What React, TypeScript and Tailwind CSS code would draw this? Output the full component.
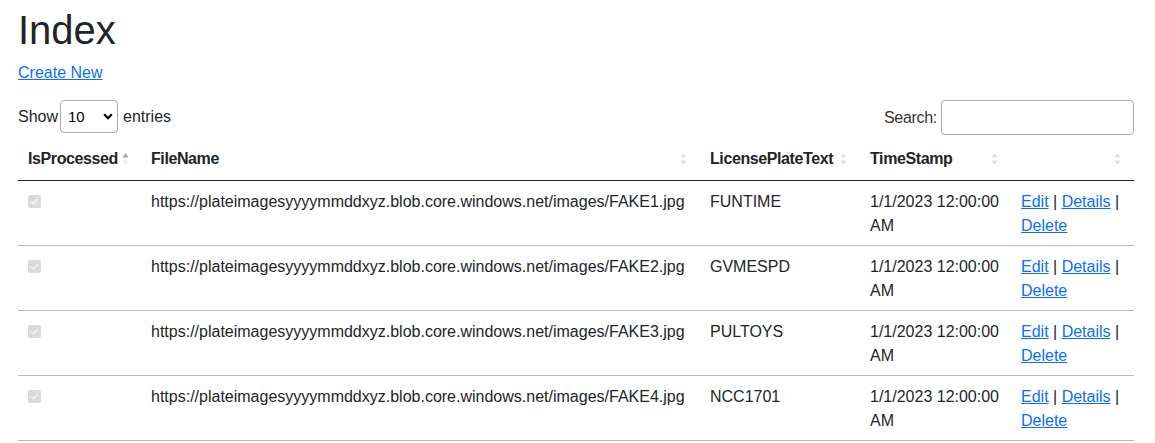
const rows = [
  { file: "FAKE1.jpg", plate: "FUNTIME" },
  { file: "FAKE2.jpg", plate: "GVMESPD" },
  { file: "FAKE3.jpg", plate: "PULTOYS" },
  { file: "FAKE4.jpg", plate: "NCC1701" },
];

function SortIcon({ active }: { active?: boolean }) {
  return (
    <svg width="7" height="14" viewBox="0 0 7 14" className="shrink-0">
      <path d="M3.5 1 L6.5 5.5 L0.5 5.5 Z" fill={active ? "#a3a3a3" : "#e2e2e2"} />
      <path d="M0.5 8.5 L6.5 8.5 L3.5 13 Z" fill={active ? "#ececec" : "#e2e2e2"} />
    </svg>
  );
}

function Th({ label, active }: { label: string; active?: boolean }) {
  return (
    <th className="pl-[10px] pr-[13px] pt-[8px] pb-[9px] text-left font-bold border-b border-[#212529]">
      <div className="flex items-center justify-between gap-1">
        <span className="tracking-[-0.4px]">{label}</span>
        <SortIcon active={active} />
      </div>
    </th>
  );
}

function Checked() {
  return (
    <div className="mt-[5px] w-[13px] h-[13px] rounded-[2px] bg-[#dadada] flex items-center justify-center">
      <svg width="11" height="11" viewBox="0 0 11 11">
        <path d="M2.2 5.6 L4.4 7.8 L8.8 3.2" stroke="#f4f4f4" strokeWidth="1.8" fill="none" />
      </svg>
    </div>
  );
}

export default function App() {
  return (
    <div className="pl-[18px] pr-[21px] font-['Liberation_Sans',Arial,sans-serif] text-[16px] leading-6 text-[#212529] bg-white">
      <h1 className="pt-[6px] mb-[7px] text-[40px] leading-[48px] font-medium">Index</h1>
      <p className="mb-[15px]">
        <a href="#" className="text-[#0d6efd] underline">Create New</a>
      </p>

      <div className="flex items-start justify-between h-[35px]">
        <div className="flex items-center h-[33px]">
          <span>Show</span>
          <div className="grid ml-[2px] mr-[5px]">
            <select
              defaultValue="10"
              className="col-start-1 row-start-1 appearance-none w-[58px] h-[33px] border border-[#aaaaaa] rounded-[4px] bg-white pl-[7px] text-[15px] text-black"
            >
              <option value="10">10</option>
              <option value="25">25</option>
              <option value="50">50</option>
              <option value="100">100</option>
            </select>
            <svg
              width="10"
              height="7"
              viewBox="0 0 10 7"
              className="col-start-1 row-start-1 self-center justify-self-end mr-[5px] pointer-events-none"
            >
              <path d="M1.2 1.3 L5 5.2 L8.8 1.3" stroke="#000" strokeWidth="2.2" fill="none" />
            </svg>
          </div>
          <span>entries</span>
        </div>
        <label className="flex items-center h-[35px]">
          <span className="mr-[4px] text-[#333] tracking-[-0.3px]">Search:</span>
          <input className="w-[193px] h-[35px] border border-[#aaaaaa] rounded-[4px] px-2 outline-none" />
        </label>
      </div>

      <table className="mt-[4px] w-full table-fixed border-collapse">
        <colgroup>
          <col className="w-[123px]" />
          <col className="w-[559px]" />
          <col className="w-[160px]" />
          <col className="w-[151px]" />
          <col className="w-[123px]" />
        </colgroup>
        <thead>
          <tr>
            <Th label="IsProcessed" active />
            <Th label="FileName" />
            <Th label="LicensePlateText" />
            <Th label="TimeStamp" />
            <Th label="" />
          </tr>
        </thead>
        <tbody>
          {rows.map((r) => (
            <tr key={r.file} className="border-b border-[#b8b8b8]">
              <td className="px-[10px] pt-[9px] pb-[7px] align-top">
                <Checked />
              </td>
              <td className="px-[10px] pt-[9px] pb-[7px] align-top">
                https://plateimagesyyyymmddxyz.blob.core.windows.net/images/{r.file}
              </td>
              <td className="px-[10px] pt-[9px] pb-[7px] align-top">{r.plate}</td>
              <td className="px-[10px] pt-[9px] pb-[7px] align-top">1/1/2023 12:00:00 AM</td>
              <td className="px-[10px] pt-[9px] pb-[7px] align-top">
                <a href="#" className="text-[#0d6efd] underline">Edit</a> |{" "}
                <a href="#" className="text-[#0d6efd] underline">Details</a> |{" "}
                <a href="#" className="text-[#0d6efd] underline">Delete</a>
              </td>
            </tr>
          ))}
        </tbody>
      </table>
    </div>
  );
}
